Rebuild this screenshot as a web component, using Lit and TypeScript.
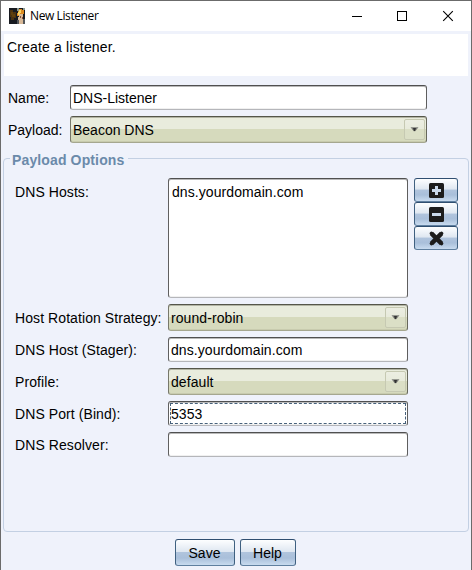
import { LitElement, html, css, svg } from "lit";
import { customElement, property } from "lit/decorators.js";

@customElement("text-field")
class TextField extends LitElement {
  @property() value = "";
  @property({ type: Boolean }) focused = false;
  static styles = css`
    :host { display: block; height: 25px; }
    .box {
      position: relative; box-sizing: border-box; height: 100%; padding: 2px 2px 0;
      display: flex; align-items: center; color: #000;
      background: #fff; border: 1px solid; border-color: #505050 #5e5e5e #b5b6ba #606060;
      border-radius: 3px; box-shadow: inset 0 1px 0 #b9b9b9, inset 0 -1px 0 #f0f0f0;
    }
    :host([tall]) .box { align-items: flex-start; padding: 5px 3px; }
    .ring { position: absolute; inset: 1px; border: 1px dashed #47617b; }
  `;
  render() {
    return html`<div class="box"><span>${this.value}</span>${this.focused ? html`<i class="ring"></i>` : ""}</div>`;
  }
}

@customElement("combo-box")
class ComboBox extends LitElement {
  @property() value = "";
  static styles = css`
    :host { display: block; height: 27px; }
    .box {
      box-sizing: border-box; height: 100%; padding: 0 1px 0 2px;
      display: flex; align-items: center; justify-content: space-between; color: #000;
      background: linear-gradient(#e9ecdd 0, #e9ecdd 12px, #d6dabd 12px, #d6dabd 100%);
      border: 1px solid; border-color: #55564a #66675a #a5a78f #77786a;
      border-radius: 3px; box-shadow: inset 0 1px 0 #b3b5a4, inset 0 -1px 0 #c8cbae;
    }
    .value { padding-top: 2px; }
    .arrow {
      box-sizing: border-box; width: 21px; height: 21px; display: grid; place-items: center;
      border: 1px solid #c6c9b2; border-radius: 2px;
      background: linear-gradient(#eceee2 0, #e7eadb 9px, #dbdfc6 9px, #dbdfc6 100%);
    }
    svg { display: block; }
  `;
  render() {
    return html`<div class="box"><span class="value">${this.value}</span>
      <span class="arrow"><svg width="9" height="5" viewBox="0 0 9 5">
        <path d="M0.5 0.3H8.5L5.2 4.2H3.8Z" fill="#7d7e79"/><path d="M3 1H6L5 4H4Z" fill="#333"/>
      </svg></span></div>`;
  }
}

@customElement("push-button")
class PushButton extends LitElement {
  static styles = css`
    :host { display: block; height: 27px; }
    .box {
      box-sizing: border-box; height: 100%; display: grid; place-items: center; color: #000;
      background: linear-gradient(#fdfeff 0%, #dfe7f1 46%, #b0c4dd 50%, #a9bfda 72%, #c8dbef 100%);
      border: 1px solid; border-color: #2f4e70 #3f6080 #5f7f9f #3f6080; border-radius: 3px;
    }
  `;
  render() {
    return html`<div class="box"><slot></slot></div>`;
  }
}

const plus = svg`<rect width="15" height="15" rx="1.5" fill="#1c1c1c"/><path d="M7.5 3V12M3 7.5H12" stroke="#c9d8ea" stroke-width="3"/>`;
const minus = svg`<rect width="15" height="15" rx="1.5" fill="#1c1c1c"/><path d="M3 7.5H12" stroke="#c9d8ea" stroke-width="3"/>`;
const cross = svg`<path d="M2.4 2.4L12.6 12.6M12.6 2.4L2.4 12.6" stroke="#1c1c1c" stroke-width="4.4" stroke-linejoin="round"/><path d="M2.4 2.4L12.6 12.6M12.6 2.4L2.4 12.6" stroke="#1c1c1c" stroke-width="3.4" stroke-linecap="round"/>`;

@customElement("app-root")
class AppRoot extends LitElement {
  static styles = css`
    :host {
      display: flex; flex-direction: column; box-sizing: border-box; width: 472px; height: 570px;
      overflow: hidden; background: #eff2fb; border: solid #6b6b6b; border-width: 1px 1px 0;
      font: 14px/17px "Liberation Sans", Arial, sans-serif; color: #000; white-space: nowrap;
    }
    .title {
      height: 30px; background: #fff; display: flex; align-items: center; padding-left: 8px;
      font: 12px/16px "Open Sans", "Noto Sans", sans-serif;
    }
    .caption { flex: 1; margin-left: 5px; letter-spacing: -0.4px; }
    .title svg { display: block; }
    .controls { padding-right: 17px; }
    .desc {
      height: 42px; box-sizing: border-box; margin: 3px 3px 0; padding: 5px 3px; background: #fff;
      letter-spacing: 0.17px;
    }
    .top {
      display: grid; grid-template-columns: 62px 357px; grid-template-rows: 25px 27px; row-gap: 6px;
      align-items: center; margin: 9px 0 0 7px;
    }
    .top span, .form span { padding-top: 2px; }
    .group {
      height: 374px; box-sizing: border-box; margin: 15px 2px 0; border: 1px solid #c3d0e3;
      border-radius: 4px; padding-left: 11px;
    }
    .legend {
      display: table; margin: -10px 0 0 -5px; padding: 0 4px 0 2px; height: 20px; line-height: 22px;
      background: #eff2fb; color: #6b8aaa; font-weight: bold; letter-spacing: 0.13px;
    }
    .body { display: flex; margin-top: 7px; }
    .form {
      display: grid; grid-template-columns: 153px 240px; row-gap: 6px; align-items: center;
      grid-template-rows: 120px 27px 25px 27px 25px 25px; letter-spacing: 0.08px;
    }
    .form .first { align-self: start; padding-top: 6px; }
    .tall { height: 120px; }
    .side { width: 44px; margin-left: 6px; }
    .side push-button { height: 24px; }
    .side svg { display: block; }
    .actions { display: flex; justify-content: center; gap: 5px; margin: 7px 2px 0 0; line-height: 18px; }
    .actions span { display: block; padding-top: 1px; }
    .save { width: 60px; }
    .help { width: 56px; }
  `;
  render() {
    return html`
      <div class="title">
        <svg width="16" height="16" viewBox="0 0 16 16" shape-rendering="crispEdges">
          <rect width="16" height="16" fill="#171a20"/>
          <path d="M1 2H4V4H7V10H5V12H2V9H1Z" fill="#4a3210"/>
          <path d="M2 4H4V6H6V9H3V7H2Z" fill="#60400d"/>
          <path d="M9 1H13V2H15V6H14V11H10V8H8V5H9Z" fill="#dc8b22"/>
          <path d="M10 2H12V5H11V7H9V4H10Z" fill="#f7d568"/>
          <path d="M10 6H14V12H15V16H10V12H9V9H10Z" fill="#d8b998"/>
          <path d="M11 8H12V10H11ZM13 9H14V11H13Z" fill="#87503a"/>
          <path d="M8 12H10V16H8ZM14 11H16V16H14Z" fill="#52565a"/>
          <path d="M8 0H10V3H8ZM14 0H16V2H14Z" fill="#8b9990"/>
        </svg>
        <span class="caption">New Listener</span>
        <svg class="controls" width="102" height="12" viewBox="0 0 102 12" fill="none" stroke="#000">
          <path d="M0 6.5H10"/><rect x="45.5" y="1.5" width="9" height="9"/>
          <path d="M91.2 1.2L100.8 10.8M100.8 1.2L91.2 10.8" stroke-width="1.1"/>
        </svg>
      </div>
      <div class="desc">Create a listener.</div>
      <div class="top">
        <span>Name:</span><text-field value="DNS-Listener"></text-field>
        <span>Payload:</span><combo-box value="Beacon DNS"></combo-box>
      </div>
      <div class="group">
        <div class="legend">Payload Options</div>
        <div class="body">
          <div class="form">
            <span class="first">DNS Hosts:</span><text-field class="tall" tall value="dns.yourdomain.com"></text-field>
            <span>Host Rotation Strategy:</span><combo-box value="round-robin"></combo-box>
            <span>DNS Host (Stager):</span><text-field value="dns.yourdomain.com"></text-field>
            <span>Profile:</span><combo-box value="default"></combo-box>
            <span>DNS Port (Bind):</span><text-field focused value="5353"></text-field>
            <span>DNS Resolver:</span><text-field></text-field>
          </div>
          <div class="side">
            ${[plus, minus, cross].map((g) => html`<push-button><svg width="15" height="15" viewBox="0 0 15 15">${g}</svg></push-button>`)}
          </div>
        </div>
      </div>
      <div class="actions">
        <push-button class="save"><span>Save</span></push-button><push-button class="help"><span>Help</span></push-button>
      </div>`;
  }
}
